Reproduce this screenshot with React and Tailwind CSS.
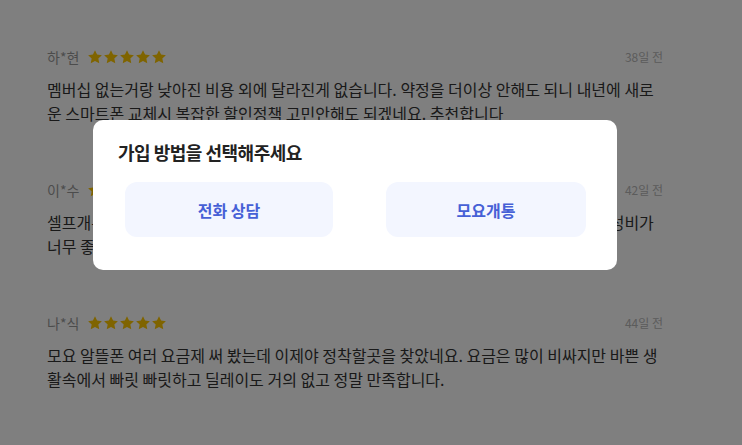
import React from "react";

const FONT = { fontFamily: '"Noto Sans CJK KR", "Noto Sans", sans-serif' };

function Star() {
  return (
    <svg width="16" height="16" viewBox="0 0 24 24" className="shrink-0">
      <path
        d="M12 1.8l3.1 6.6 7.2.9-5.3 5 1.4 7.1L12 17.9l-6.4 3.5 1.4-7.1-5.3-5 7.2-.9z"
        fill="#ffc800"
      />
    </svg>
  );
}

const reviews = [
  {
    name: "하*현",
    date: "38일 전",
    text: "멤버십 없는거랑 낮아진 비용 외에 달라진게 없습니다. 약정을 더이상 안해도 되니 내년에 새로운 스마트폰 교체시 복잡한 할인정책 고민안해도 되겠네요. 추천합니다",
  },
  {
    name: "이*수",
    date: "42일 전",
    text: "셀프개통도 쉽고 유심도 빨리 와서 좋았어요. 통화 품질도 괜찮고 잘 터지고 무엇보다 가성비가 너무 좋아요. 주변에도 추천하고 있습니다.",
  },
  {
    name: "나*식",
    date: "44일 전",
    text: "모요 알뜰폰 여러 요금제 써 봤는데 이제야 정착할곳을 찾았네요. 요금은 많이 비싸지만 바쁜 생활속에서 빠릿 빠릿하고 딜레이도 거의 없고 정말 만족합니다.",
  },
];

export default function App() {
  return (
    <div className="relative w-[742px] h-[445px] overflow-hidden bg-white" style={FONT}>
      <div className="flex flex-col pt-[20px]">
        {reviews.map((r) => (
          <div key={r.name} className="pl-[47px] pr-[79px] py-[28px] h-[133px]">
            <div className="flex items-center h-[18px]">
              <span className="text-[14px] text-[#999] leading-[18px]">{r.name}</span>
              <div className="flex ml-[8px]">
                <Star />
                <Star />
                <Star />
                <Star />
                <Star />
              </div>
              <span className="ml-auto text-[12px] text-[#b8b8b8] leading-[18px]">{r.date}</span>
            </div>
            <p className="mt-[11px] text-[16px] leading-[24px] text-[#333]">{r.text}</p>
          </div>
        ))}
      </div>

      <div className="absolute inset-0 bg-black/50" />

      <div className="absolute left-[93px] top-[120px] w-[524px] h-[150px] rounded-[10px] bg-white">
        <div className="pl-[25px] pt-[19px] text-[18px] leading-[26px] font-semibold tracking-[-0.5px] text-[#222]">
          가입 방법을 선택해주세요
        </div>
        <div className="flex mt-[17px] pl-[32px]">
          <button className="w-[208px] h-[55px] rounded-[12px] bg-[#f3f6ff] text-[#4660d6] text-[16px] font-semibold">
            전화 상담
          </button>
          <button className="ml-[53px] w-[200px] h-[55px] rounded-[12px] bg-[#f3f6ff] text-[#4660d6] text-[16px] font-semibold">
            모요개통
          </button>
        </div>
      </div>
    </div>
  );
}
